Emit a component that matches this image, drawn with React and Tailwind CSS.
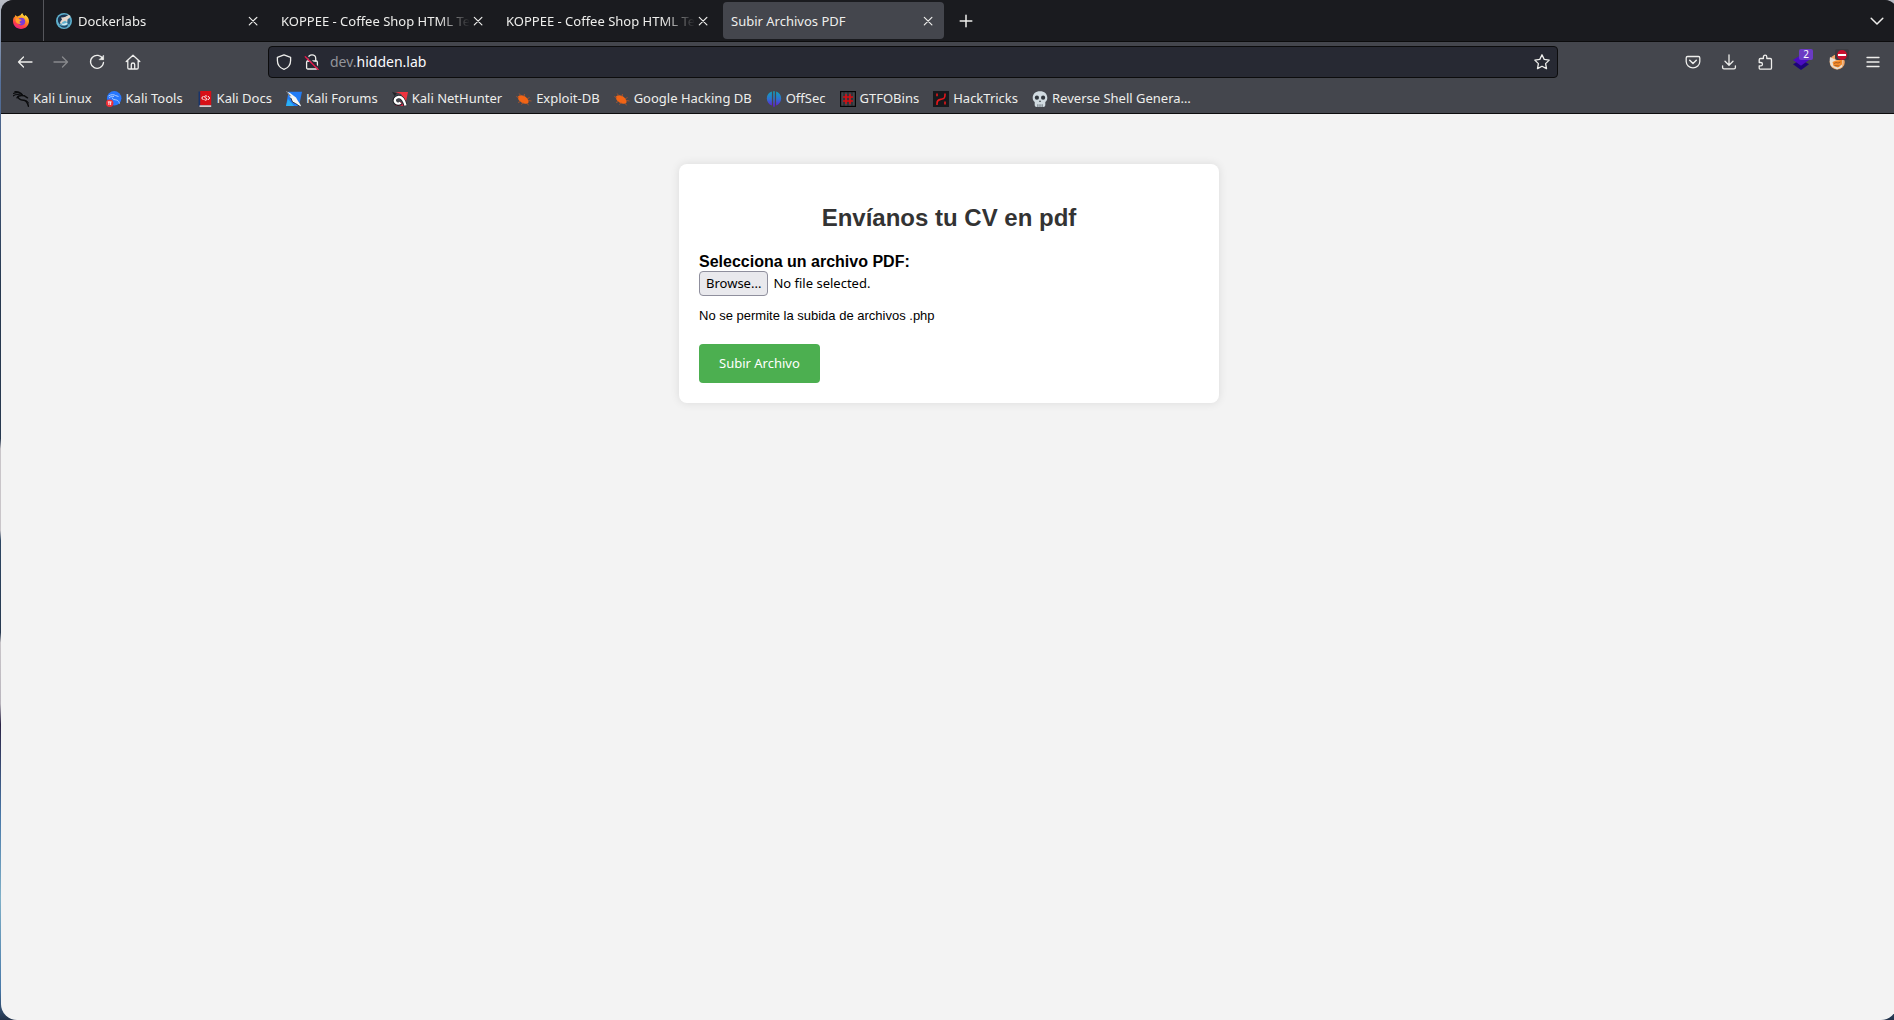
import { useRef, useState } from "react";

function FirefoxLogo() {
  return (
    <svg viewBox="0 0 16 16" className="size-4">
      <defs>
        <linearGradient id="fx" x1="0.8" y1="0" x2="0.3" y2="1">
          <stop offset="0" stopColor="#fff24a" />
          <stop offset="0.4" stopColor="#ff9a1f" />
          <stop offset="0.75" stopColor="#ff3d47" />
          <stop offset="1" stopColor="#e5208a" />
        </linearGradient>
      </defs>
      <path d="M2.500 2c.5.8 1.200 1.400 2 1.600C5.600 3 6.500 2.400 7.500 2.300c.3-1 1-1.800 2-2.300 0 1.500 1 2.400 2.300 3.300.2-.6.200-1 .1-1.500C14.500 3.200 16 5.700 16 8.300 16 12.600 12.400 16 8 16S0 12.600 0 8.300C0 6.300.5 4.700 1.400 3.800c.1.300.2.500.3.700C1.700 3.600 1.900 2.700 2.500 2z" fill="url(#fx)" />
      <circle cx="8.400" cy="8.600" r="3.800" fill="#7b3bd6" />
      <path d="M2.600 5.400c1.600-.4 3.300 0 4.300 1.100.8.100 2 .3 1.800.8-.5.600-1.600.6-2.100 1.100-.3 1.300.8 2 2.100 1.700-1 1.300-3.300 1.300-4.600.2S2.200 7 2.600 5.400z" fill="#ffa02e" />
    </svg>
  );
}

function DockerlabsIcon() {
  return (
    <svg viewBox="0 0 16 16" className="size-4">
      <circle cx="8" cy="8" r="8" fill="#5fb0cd" />
      <path d="M2.200 4.800C4.500 1.500 9 .6 12.500 2.500L9.500 4 6.500 6.500 4 11.500C2.200 10.500 1.300 7.500 2.200 4.800z" fill="#1c3551" />
      <path d="M5 4.500C8 4.800 10.500 3.500 13 1.800l1.500 2-2.500 2.400-.5 3-2.500-1.500L6.500 9 5 11.500l-1-2.300L6 6.500z" fill="#e6d6ca" />
      <path d="M11.500 6.500l2-1.500 1 3-1 3.500-2.200-1z" fill="#2a6486" />
      <path d="M3 11.500c2.500 2 6.500 1.800 9.500-.5l-1.500 3c-2.500 1.300-6 .8-8-2.500z" fill="#204968" />
      <path d="M6 10.500c2 .5 3.500 0 5-1l.5 1.500c-1.800 1.300-3.800 1.500-5.500.8z" fill="#d4ebf3" />
    </svg>
  );
}

function Stroke({ children, className = "size-4" }) {
  return (
    <svg viewBox="0 0 16 16" className={className} fill="none" stroke="#eeeeec" strokeWidth="1.300" strokeLinecap="round" strokeLinejoin="round">
      {children}
    </svg>
  );
}

const BackIcon = () => <Stroke><path d="M15 8H1.500M6.500 3l-5 5 5 5" /></Stroke>;
const ForwardIcon = () => <Stroke><path d="M1 8h13.500M9.500 3l5 5-5 5" /></Stroke>;
const ReloadIcon = () => (
  <Stroke>
    <path d="M13.900 5A6.500 6.500 0 1 0 14.500 8.500" />
    <path d="M14.600 1.500v4.200h-4.200z" fill="#eeeeec" strokeWidth="0.600" />
  </Stroke>
);
const HomeIcon = () => (
  <Stroke>
    <path d="M1.200 7.500L8 1.300l6.800 6.200M2.800 6.500v7.300c0 .7.500 1.200 1.200 1.200h8c.7 0 1.200-.5 1.200-1.200V6.500M6.300 14.800v-4.300c0-.9.700-1.500 1.700-1.500s1.700.6 1.700 1.500v4.300" />
  </Stroke>
);
const ShieldIcon = () => (
  <Stroke>
    <path d="M8 .9l6.600 2.400v3.200c0 4-2.500 7.400-6.600 8.800C3.900 13.900 1.400 10.500 1.400 6.500V3.300z" />
  </Stroke>
);
const LockIcon = () => (
  <Stroke>
    <path d="M4.300 7V4.300C4.300 2.300 5.900.8 8 .8s3.700 1.500 3.700 3.500V7" />
    <rect x="2.600" y="7" width="10.800" height="8" rx="1.200" />
    <path d="M2.500 1.800l12.300 12.300" stroke="#272933" strokeWidth="1.500" />
    <path d="M1.300 2.700l13 13" stroke="#e5174a" strokeWidth="1.400" />
  </Stroke>
);
const StarIcon = () => (
  <Stroke>
    <path d="M8 .8l2.200 4.600 5 .7-3.600 3.500.9 5L8 12.200l-4.500 2.400.9-5L.8 6.100l5-.7z" />
  </Stroke>
);
const PocketIcon = () => (
  <Stroke>
    <path d="M2.600 2.500h10.800c.8 0 1.400.6 1.400 1.400v3.600a6.800 6.300 0 0 1-13.600 0V3.900c0-.8.600-1.400 1.400-1.400z" />
    <path d="M4.700 6.300L8 9.500l3.300-3.200" strokeWidth="1.500" />
  </Stroke>
);
const DownloadIcon = () => (
  <Stroke>
    <path d="M8 .8v10.400M4 7.200l4 4 4-4M1.600 11.800v1.700c0 .8.600 1.400 1.400 1.400h10c.8 0 1.400-.6 1.400-1.400v-1.700" />
  </Stroke>
);
const PuzzleIcon = () => (
  <Stroke>
    <path d="M2.200 5.800c0-.8.500-1.300 1.300-1.300h2.900V2.900a1.700 1.700 0 0 1 3.400 0v1.600h3.400c.8 0 1.300.5 1.300 1.300v8.100c0 .8-.5 1.300-1.300 1.300H3.500c-.8 0-1.300-.5-1.300-1.300v-2.100h1.600a1.600 1.600 0 0 0 0-3.300H2.200z" />
  </Stroke>
);
const MenuIcon = () => <Stroke><path d="M2 3.500h12M2 8h12M2 12.500h12" /></Stroke>;
const ChevronIcon = () => <Stroke><path d="M2.200 5.200L8 11l5.800-5.800" strokeWidth="1.500" /></Stroke>;
const PlusIcon = () => <Stroke><path d="M8 2.200v11.600M2.200 8h11.600" strokeWidth="1.500" /></Stroke>;
const CloseIcon = () => <Stroke><path d="M4.300 4.300l7.600 7.600M11.900 4.300l-7.600 7.600" strokeWidth="1.200" /></Stroke>;

function Svg({ children }) {
  return <svg viewBox="0 0 16 16" className="size-4 shrink-0">{children}</svg>;
}

const KaliIcon = () => (
  <Svg>
    <g fill="none" stroke="#0b0c0e" strokeLinecap="round">
      <path d="M.5 2.500C3 1 7 1.500 9 3.500M0 5C3 3 6 3.300 8.500 4.500" strokeWidth="1.100" />
      <path d="M2 .8C5 .5 8 2 9.300 4M4 6.800C5.500 4 9 4.300 11.500 4.800l3 2" strokeWidth="1.400" />
      <path d="M5 5.500c.3 3.500 3.500 3.500 6 3.700 2.500.3 3.500 2.300 4.500 6" strokeWidth="1.500" />
      <path d="M12.500 9.500c2 .5 2.700 1.500 3 2.500" strokeWidth="1" />
    </g>
  </Svg>
);
const ToolsIcon = () => (
  <Svg>
    <circle cx="8.200" cy="7.300" r="7.200" fill="#2777ff" />
    <path d="M2.500 5c2.500-1.800 5.500-1.500 7-.5l3 1M6 6.500c.5 2.500 3 2 4.500 2.500 2 .5 2.500 2 3 3.500M3 7c1.500-1.500 3-1.800 5-1.500" fill="none" stroke="#b9d3ff" strokeWidth=".9" />
    <circle cx="3.700" cy="12.300" r="3.700" fill="#f02d35" />
    <path d="M1.800 10.900h3.800M2.900 11v3M4.600 11v3" stroke="#fff" strokeWidth=".9" />
  </Svg>
);
const DocsIcon = () => (
  <Svg>
    <path d="M1.500.5h2v15h-2z" fill="#18346b" />
    <path d="M3.200 0h11v14.200h-11z" fill="#d80f17" />
    <path d="M2.500 14.200h11.700V16H2.500z" fill="#d9c9cc" />
    <path d="M6.500 5L4.700 7l1.800 2M10.900 5l1.800 2-1.800 2M10 5.300c-1-.8-2.600-.4-2.500.6.100 1.200 2.400 1 2.400 2.300 0 1-1.600 1.300-2.500.5" fill="none" stroke="#fff" strokeWidth="1" />
  </Svg>
);
const ForumsIcon = () => (
  <Svg>
    <path d="M2.500.7H16L13 15H0z" fill="#227cf5" />
    <path d="M2 8l6 7H0z" fill="#29b0f5" />
    <path d="M0 .3L4 2l6 4.500 2 3.500 3 4.500-1 1-4.500-3L6.500 11 4.800 7z" fill="#f6f6f4" />
    <path d="M.5.800l4 4.400M4.800 7L6.500 11l3 1.500 4.500 3" fill="none" stroke="#222832" strokeWidth=".9" />
  </Svg>
);
const NetHunterIcon = () => (
  <Svg>
    <path d="M3.500 1H16l-2 9.500L9 3z" fill="#f0333f" />
    <path d="M2 11l2 4h8l-3-4z" fill="#d3284a" />
    <path d="M0 .8l5 1.700L2.500 5z" fill="#222428" />
    <path d="M13.500 14.800C12 8.500 9.500 5.500 6.300 5.800 2.800 6.200 1.500 9 3.200 11.500c1.300 2 4.300 2 5.500.3" fill="none" stroke="#1d1f24" strokeWidth="3.800" />
    <path d="M13.500 14.500C12 8.500 9.500 5.700 6.500 6 3 6.500 2 9 3.500 11.300c1.300 1.800 3.800 1.700 5 .3" fill="none" stroke="#fff" strokeWidth="2.400" />
  </Svg>
);
const BugIcon = () => (
  <Svg>
    <path d="M2 5.500c2-2 5.500-1.500 8 .7 2 1.700 3 4 2.500 5.300-1 1.700-4.500 1.500-7 0C3 10 1.300 7.500 2 5.500z" fill="#f26415" />
    <path d="M.3 5.500L3 7M5 5L3.200 2.500M8 5.500L8.500 3M11 8l2.500-1.500M12 9.500l3.500.5M4.500 10.500L2 11.500M7 11.500l-1.500 2.200M11 12l1.500 2.300" fill="none" stroke="#a9552d" strokeWidth=".9" />
  </Svg>
);
const OffSecIcon = () => (
  <Svg>
    <defs>
      <linearGradient id="os" x1="0" y1="0" x2="0" y2="16" gradientUnits="userSpaceOnUse">
        <stop offset="0" stopColor="#10a3b8" />
        <stop offset="0.500" stopColor="#2d72cf" />
        <stop offset="1" stopColor="#6a12d8" />
      </linearGradient>
    </defs>
    <path d="M5.900.6v14C2.800 13.500.8 11 .8 7.600S2.800 1.600 5.900.6zM10.100.6v14c2.900-1.100 5.100-3.600 5.100-7s-2.200-6-5.100-7zM7.200.3h1.600v15.500H7.200z" fill="url(#os)" />
  </Svg>
);
const GtfoIcon = () => (
  <Svg>
    <path d="M0 0h16v16H0z" fill="#050506" />
    <path d="M1.200 1.200h13.600v13.600H1.200z" fill="#44464c" />
    <path d="M4 1v14M8 1v14M12 1v14" stroke="#222327" strokeWidth="1" />
    <path d="M6 3v10M10 3v10M3 6h10M3 10h10" stroke="#d90b10" strokeWidth="1.500" />
  </Svg>
);
const HackTricksIcon = () => (
  <Svg>
    <path d="M0 0h16v16H0z" fill="#17191d" />
    <path d="M4 2.500v2.700M4 14v-1.500c0-4.500 2.500-3.500 4-4.200 1.700-.6 4 .2 4-4.500V2.500M12 13.500v-3" fill="none" stroke="#e5171b" strokeWidth="1.600" />
  </Svg>
);
const SkullIcon = () => (
  <Svg>
    <path d="M8 .2c4.500 0 7.300 2.700 7.300 6.500 0 2-.7 3.300-2 4.300v3c0 1.300-.8 2-2 2H4.700c-1.200 0-2-.7-2-2v-3C1.400 10 .7 8.700.7 6.700.7 2.900 3.500.2 8 .2z" fill="#d0dae0" />
    <circle cx="4.900" cy="6.700" r="2.100" fill="#30363d" />
    <circle cx="11.100" cy="6.700" r="2.100" fill="#30363d" />
    <path d="M8 9l1.100 2H6.900zM5.500 13.200V16h.8v-2.800zM7.600 13.200V16h.8v-2.800zM9.700 13.200V16h.8v-2.800z" fill="#4d565e" />
  </Svg>
);
const LayersIcon = () => (
  <Svg>
    <path d="M8 5.500l8 4.800L8 16 0 10.300z" fill="#1d0577" />
    <path d="M8 1l8 5-8 5.800L0 6z" fill="#4a0cc0" />
  </Svg>
);
const FoxIcon = () => (
  <Svg>
    <circle cx="8.200" cy="8" r="7.600" fill="#f2a767" />
    <path d="M1 3l4 2 4 1 5-1-1 8-5 2.500L2 12C.5 9 .5 6 1 3z" fill="#e9dfd3" />
    <path d="M3.500 8L7 6.500 11 6l2.500-1.500-.5 6-4 3-4.500-1.500z" fill="#f58b2b" />
    <path d="M5 9.500l2-1 2 .5 2.500-1M5.500 11.500l5 .5" fill="none" stroke="#9a5320" strokeWidth=".8" />
  </Svg>
);

const tabs = [
  { title: "Dockerlabs", icon: <DockerlabsIcon /> },
  { title: "KOPPEE - Coffee Shop HTML Template" },
  { title: "KOPPEE - Coffee Shop HTML Template" },
  { title: "Subir Archivos PDF", active: true },
];

const bookmarks = [
  ["Kali Linux", KaliIcon],
  ["Kali Tools", ToolsIcon],
  ["Kali Docs", DocsIcon],
  ["Kali Forums", ForumsIcon],
  ["Kali NetHunter", NetHunterIcon],
  ["Exploit-DB", BugIcon],
  ["Google Hacking DB", BugIcon],
  ["OffSec", OffSecIcon],
  ["GTFOBins", GtfoIcon],
  ["HackTricks", HackTricksIcon],
  ["Reverse Shell Genera…", SkullIcon],
];

function Tab({ title, icon, active }) {
  return (
    <div className={`flex h-[37px] w-[221px] items-center rounded px-2 ${active ? "bg-[#44464d]" : ""}`}>
      {icon && <span className="mr-1.5 shrink-0">{icon}</span>}
      <button
        type="button"
        className={`min-w-0 flex-1 overflow-hidden whitespace-nowrap pt-0.5 text-left ${
          active ? "" : "[mask-image:linear-gradient(to_left,transparent,black_32px)]"
        }`}
      >
        {title}
      </button>
      <button type="button" aria-label="Close tab" className="shrink-0"><CloseIcon /></button>
    </div>
  );
}

function ToolButton({ label, disabled, children }) {
  return (
    <button type="button" aria-label={label} disabled={disabled} className="relative flex h-8 w-9 items-center justify-center disabled:opacity-40">
      {children}
    </button>
  );
}

function TabStrip() {
  return (
    <div className="flex h-[42px] items-center border-b border-[#0c0c0d] bg-[#1a1b1f]">
      <div className="flex h-full w-[43px] items-center border-r border-[#55565b] pl-3">
        <FirefoxLogo />
      </div>
      <div className="ml-1 flex gap-1">
        {tabs.map((tab, i) => <Tab key={i} {...tab} />)}
      </div>
      <button type="button" aria-label="New tab" className="ml-3.5"><PlusIcon /></button>
      <button type="button" aria-label="List all tabs" className="ml-auto mr-3"><ChevronIcon /></button>
    </div>
  );
}

function NavBar() {
  return (
    <div className="flex h-10 items-center px-1.5">
      <ToolButton label="Back"><BackIcon /></ToolButton>
      <ToolButton label="Forward" disabled><ForwardIcon /></ToolButton>
      <ToolButton label="Reload"><ReloadIcon /></ToolButton>
      <ToolButton label="Home"><HomeIcon /></ToolButton>
      <div className="mx-[117px] flex h-8 flex-1 items-center rounded border border-[#0c0c0d] bg-[#272933] px-[7px]">
        <button type="button" aria-label="Tracking protection"><ShieldIcon /></button>
        <button type="button" aria-label="Connection not secure" className="ml-3"><LockIcon /></button>
        <div className="ml-2.5 flex-1 text-sm text-[#fbfbfe]"><span className="text-[#93949a]">dev.</span>hidden.lab</div>
        <button type="button" aria-label="Bookmark this page"><StarIcon /></button>
      </div>
      <ToolButton label="Save to Pocket"><PocketIcon /></ToolButton>
      <ToolButton label="Downloads"><DownloadIcon /></ToolButton>
      <ToolButton label="Extensions"><PuzzleIcon /></ToolButton>
      <ToolButton label="Wappalyzer">
        <LayersIcon />
        <span className="absolute right-1.5 top-[3px] h-[11px] w-3.5 rounded-xs bg-[#6b3bc4] text-center text-[10px] leading-[11px] text-white">2</span>
      </ToolButton>
      <ToolButton label="FoxyProxy">
        <FoxIcon />
        <span className="absolute right-1.5 top-[3px] flex h-[11px] w-3.5 items-center justify-center rounded-xs bg-[#3b3c41]">
          <span className="flex size-2.5 items-center justify-center rounded-full bg-[#c8102e]">
            <span className="h-0.5 w-2 bg-white" />
          </span>
        </span>
      </ToolButton>
      <ToolButton label="Menu"><MenuIcon /></ToolButton>
    </div>
  );
}

function BookmarksBar() {
  return (
    <nav className="flex h-[31px] items-center gap-3.5 pl-3 pt-0.5">
      {bookmarks.map(([name, Icon]) => (
        <a key={name} href="#" className="flex items-center gap-1 whitespace-nowrap">
          <Icon />
          {name}
        </a>
      ))}
    </nav>
  );
}

function UploadForm() {
  const fileInput = useRef(null);
  const [fileName, setFileName] = useState("");
  return (
    <form
      onSubmit={(e) => e.preventDefault()}
      className="mx-auto mt-[50px] w-[540px] rounded-lg bg-white px-5 pb-5 pt-10 font-['Liberation_Sans',Arial,sans-serif] text-black shadow-[0_0_10px_rgba(0,0,0,0.1)]"
    >
      <h2 className="text-center text-2xl font-bold leading-7 text-[#333]">Envíanos tu CV en pdf</h2>
      <label htmlFor="archivo" className="mt-5 block text-base font-bold leading-[19px]">Selecciona un archivo PDF:</label>
      <div className="flex items-center gap-[5px] font-['Noto_Sans',sans-serif] text-[13px]">
        <input ref={fileInput} id="archivo" type="file" className="hidden" onChange={(e) => setFileName(e.target.files[0]?.name ?? "")} />
        <button
          type="button"
          onClick={() => fileInput.current.click()}
          className="h-[25px] rounded border border-[#8f8f9d] bg-[#e9e9ed] px-1.5"
        >
          Browse...
        </button>
        <span>{fileName || "No file selected."}</span>
      </div>
      <p className="mt-3 text-[13px] leading-4">No se permite la subida de archivos .php</p>
      <button type="submit" className="mt-5 block h-[39px] rounded bg-[#4caf50] px-5 font-['Noto_Sans',sans-serif] text-[13px] text-white">
        Subir Archivo
      </button>
    </form>
  );
}

export default function App() {
  return (
    <div className="flex min-h-screen overflow-hidden bg-[linear-gradient(#b9bcc4,#56719c_8%,#26384f_28%,#26384f_43%,#c9c5c9_44%,#c9c5c9_52%,#2d4663_53%,#26384f_62%,#c9c5c9_63%,#b9b5bd_69%,#2a2345_71%,#4878a8_80%,#7fb0c8_88%,#4878a8_97%,#22324a)] pl-px font-['Noto_Sans',sans-serif] text-[13px]">
      <div className="-mr-[3px] flex flex-1 flex-col overflow-hidden rounded-2xl rounded-t-xl bg-[#f3f3f3]">
        <header className="border-b border-[#0c0c0d] bg-[#44464d] text-[#eeeeec]">
          <TabStrip />
          <NavBar />
          <BookmarksBar />
        </header>
        <main className="flex-1">
          <UploadForm />
        </main>
      </div>
    </div>
  );
}
